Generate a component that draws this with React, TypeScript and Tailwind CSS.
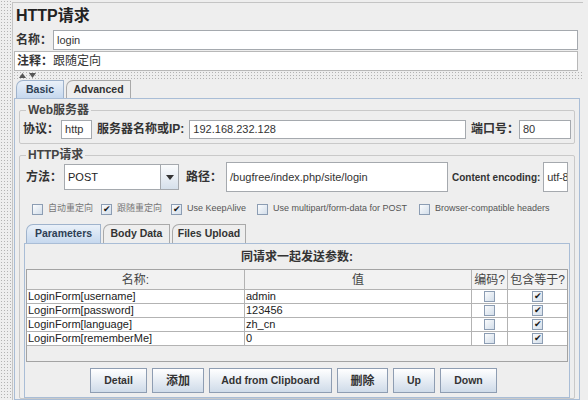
import React from 'react';

const FONT = "font-['Liberation_Sans','Noto_Sans_CJK_SC',sans-serif]";

function Check({ checked = false }: { checked?: boolean }) {
  return (
    <span className="flex h-[11px] w-[11px] shrink-0 items-center justify-center border border-[#8c9db3] bg-gradient-to-br from-[#fbfcfd] to-[#d3deea] text-[9px] leading-none text-[#1a1a1a]">
      {checked ? '✔' : ''}
    </span>
  );
}

function Tab({ label, active = false, className = '' }: { label: string; active?: boolean; className?: string }) {
  return (
    <div
      className={`flex h-full shrink-0 items-center justify-center rounded-tl-[7px] border border-b-0 text-[10.5px] font-bold whitespace-nowrap ${
        active
          ? 'border-[#9fb3cc] bg-gradient-to-b from-[#eaf1f9] to-[#c6d8ee] text-[#2e3f55]'
          : 'border-[#a9a9a9] bg-[#eeeeee] text-[#333]'
      } ${className}`}
    >
      {label}
    </div>
  );
}

function Field({ value, className = '' }: { value: string; className?: string }) {
  return (
    <div className={`flex shrink-0 items-center overflow-hidden border border-[#a5a9ae] bg-white pl-[3px] text-[11px] whitespace-nowrap text-[#333] ${className}`}>
      {value}
    </div>
  );
}

function Label({ text, className = '' }: { text: string; className?: string }) {
  return <span className={`shrink-0 text-[12px] font-bold whitespace-nowrap ${className}`}>{text}</span>;
}

function Btn({ label, className = '' }: { label: string; className?: string }) {
  return (
    <div
      className={`flex h-[25px] shrink-0 items-center justify-center border border-[#8e9db2] bg-gradient-to-b from-[#ffffff] to-[#cfdbe9] text-[10.5px] font-bold whitespace-nowrap text-[#333] ${className}`}
    >
      {label}
    </div>
  );
}

const params = [
  { name: 'LoginForm[username]', value: 'admin' },
  { name: 'LoginForm[password]', value: '123456' },
  { name: 'LoginForm[language]', value: 'zh_cn' },
  { name: 'LoginForm[rememberMe]', value: '0' },
];

export default function App() {
  return (
    <div className={`flex h-[400px] w-[588px] overflow-hidden bg-[#eeeeee] text-[#333] ${FONT}`}>
      {/* 左侧分隔条 */}
      <div className="h-full w-[12px] shrink-0 bg-[radial-gradient(circle,#b3b3b3_0.7px,transparent_0.9px)] bg-[length:3px_3px]" />

      <div className="mt-[2px] flex w-[571px] flex-col border-l border-t border-[#c4c4c4]">
        <div className="flex h-[26px] items-center pl-[3px] text-[16px] font-bold text-[#222]">HTTP请求</div>

        <div className="mr-[5px] flex h-[22px] items-center">
          <Label text="名称：" className="w-[40px] pl-[3px]" />
          <Field value="login" className="h-[20px] flex-1 shrink" />
        </div>

        <div className="mr-[5px] ml-[1px] flex h-[20px] items-center border border-[#b8b8b8] bg-white pl-[2px] text-[12px]">
          <span className="font-bold">注释：</span>
          <span>跟随定向</span>
        </div>

        <div className="flex h-[9px] items-center gap-[3px] bg-[radial-gradient(circle,#b3b3b3_0.7px,transparent_0.9px)] bg-[length:3px_3px] pl-[6px]">
          <svg width="7" height="5" viewBox="0 0 7 5">
            <path d="M0 5 L3.5 0 L7 5 Z" fill="#555" />
          </svg>
          <svg width="7" height="5" viewBox="0 0 7 5">
            <path d="M0 0 L3.5 5 L7 0 Z" fill="#555" />
          </svg>
        </div>

        <div className="flex h-[18px] items-end gap-[2px] pl-[3px]">
          <Tab label="Basic" active className="w-[48px]" />
          <Tab label="Advanced" className="w-[65px]" />
        </div>

        <div className="mr-[3px] ml-[1px] flex flex-1 flex-col border border-[#a9bdd6] px-[4px]">
          <fieldset className="mt-[4px] rounded-[2px] border border-[#c9c9c9] px-[3px] pb-[4px]">
            <legend className="ml-[3px] px-[2px] text-[12px] leading-[14px] font-bold text-[#444]">Web服务器</legend>
            <div className="mt-[2px] flex h-[20px] items-center">
              <Label text="协议：" />
              <Field value="http" className="ml-[2px] h-[19px] w-[31px]" />
              <Label text="服务器名称或IP:" className="ml-[5px]" />
              <Field value="192.168.232.128" className="ml-[5px] h-[19px] flex-1 shrink" />
              <Label text="端口号：" className="ml-[5px]" />
              <Field value="80" className="h-[19px] w-[52px]" />
            </div>
          </fieldset>

          <fieldset className="mt-[5px] flex flex-1 flex-col rounded-[2px] border border-[#c9c9c9] px-[3px]">
            <legend className="ml-[3px] px-[2px] text-[12px] leading-[12px] font-bold text-[#444]">HTTP请求</legend>

            <div className="mt-[1px] flex h-[30px] items-center pl-[3px]">
              <Label text="方法：" />
              <div className="ml-[2px] flex h-[26px] w-[115px] shrink-0 border border-[#a5a9ae] bg-white">
                <div className="flex flex-1 items-center pl-[3px] text-[11px] text-[#222]">POST</div>
                <div className="flex w-[18px] items-center justify-center border-l border-[#a5a9ae] bg-gradient-to-b from-[#fbfcfd] to-[#d6e0eb]">
                  <svg width="8" height="5" viewBox="0 0 8 5">
                    <path d="M0 0 L4 5 L8 0 Z" fill="#333" />
                  </svg>
                </div>
              </div>
              <Label text="路径：" className="ml-[7px]" />
              <Field value="/bugfree/index.php/site/login" className="ml-[4px] h-[30px] w-[222px]" />
              <span className="ml-[4px] shrink-0 text-[10px] font-bold whitespace-nowrap">Content encoding:</span>
              <Field value="utf-8" className="ml-[3px] h-[30px] w-[25px] pl-0 text-[9px] tracking-[-0.2px]" />
            </div>

            <div className="mt-[10px] flex h-[14px] items-center pl-[9px] text-[9px] whitespace-nowrap text-[#555]">
              <div className="flex w-[69px] shrink-0 items-center gap-[5px]">
                <Check />
                <span className="text-[#777]">自动重定向</span>
              </div>
              <div className="flex w-[70px] shrink-0 items-center gap-[5px]">
                <Check checked />
                <span className="text-[#777]">跟随重定向</span>
              </div>
              <div className="flex w-[86px] shrink-0 items-center gap-[5px]">
                <Check checked />
                <span>Use KeepAlive</span>
              </div>
              <div className="flex w-[162px] shrink-0 items-center gap-[5px]">
                <Check />
                <span>Use multipart/form-data for POST</span>
              </div>
              <div className="flex items-center gap-[5px]">
                <Check />
                <span>Browser-compatible headers</span>
              </div>
            </div>

            <div className="mt-[8px] flex h-[19px] items-end gap-[2px] pl-[3px]">
              <Tab label="Parameters" active className="w-[75px]" />
              <Tab label="Body Data" className="w-[67px]" />
              <Tab label="Files Upload" className="w-[74px]" />
            </div>

            <div className="mr-[1px] ml-[1px] flex flex-1 flex-col border border-[#a9bdd6] px-[1px]">
              <div className="flex h-[25px] items-center justify-center text-[12px] font-bold text-[#333]">同请求一起发送参数:</div>

              <div className="border border-[#a3a3a3] text-[11px]">
                <div className="flex h-[19px] bg-[#f2f2f2] text-[12px] text-[#444]">
                  <div className="flex w-[218px] items-center justify-center border-r border-[#b3b3b3]">名称:</div>
                  <div className="flex w-[227px] items-center justify-center border-r border-[#b3b3b3]">值</div>
                  <div className="flex w-[36px] items-center justify-center border-r border-[#b3b3b3]">编码?</div>
                  <div className="flex flex-1 items-center justify-center">包含等于?</div>
                </div>
                {params.map((p) => (
                  <div key={p.name} className="flex h-[14px] border-t border-[#b3b3b3] bg-white leading-[13px] text-[#222]">
                    <div className="w-[218px] border-r border-[#b3b3b3] pl-[1px]">{p.name}</div>
                    <div className="w-[227px] border-r border-[#b3b3b3] pl-[1px]">{p.value}</div>
                    <div className="flex w-[36px] items-center justify-center border-r border-[#b3b3b3]">
                      <Check />
                    </div>
                    <div className="flex flex-1 items-center justify-center">
                      <Check checked />
                    </div>
                  </div>
                ))}
                <div className="h-[16px] border-t border-[#b3b3b3] bg-[#eeeeee]" />
              </div>

              <div className="mt-[6px] flex justify-center gap-[5px] pr-[7px]">
                <Btn label="Detail" className="w-[57px]" />
                <Btn label="添加" className="w-[52px] text-[12px]" />
                <Btn label="Add from Clipboard" className="w-[123px]" />
                <Btn label="删除" className="w-[51px] text-[12px]" />
                <Btn label="Up" className="w-[42px]" />
                <Btn label="Down" className="w-[57px]" />
              </div>
            </div>
          </fieldset>
        </div>
      </div>
    </div>
  );
}
